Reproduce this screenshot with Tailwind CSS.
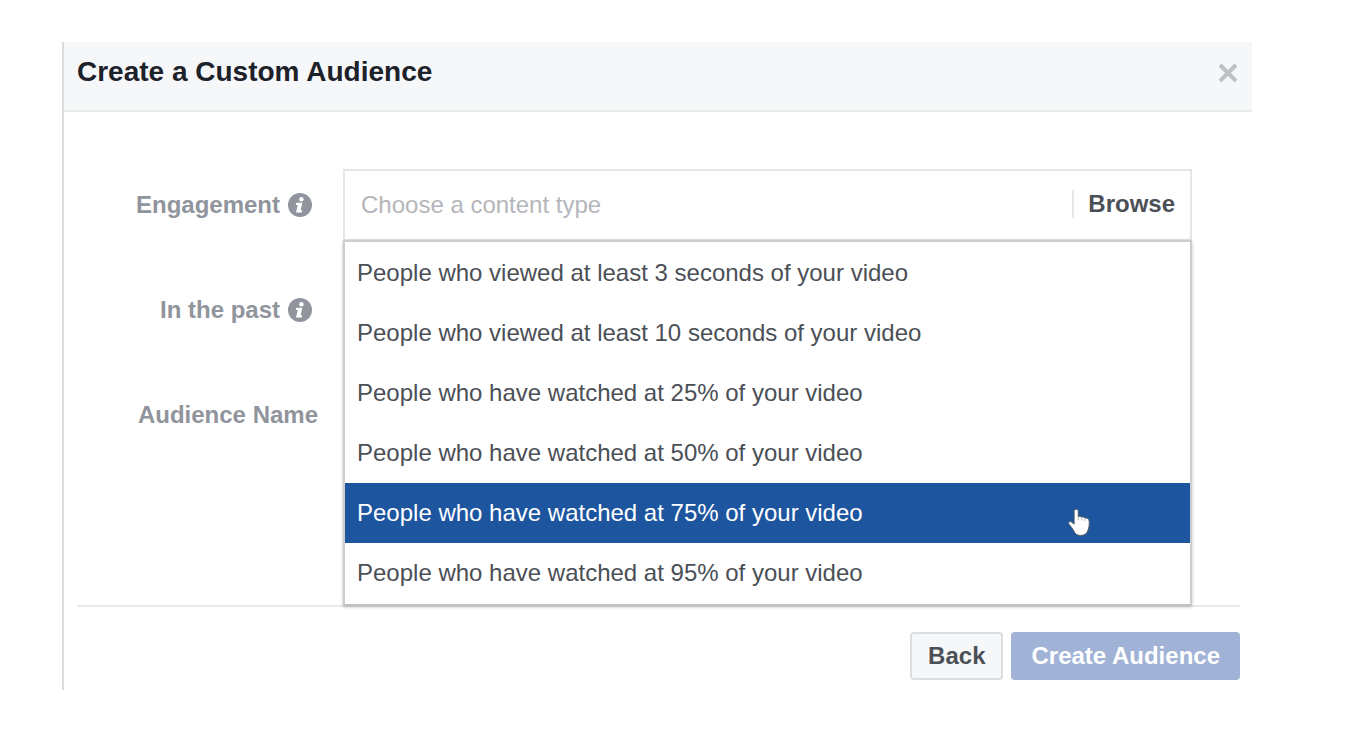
<!DOCTYPE html>
<html lang="en">
<head>
<meta charset="utf-8">
<meta name="viewport" content="width=device-width, initial-scale=1">
<title>Create a Custom Audience</title>
<script src="https://cdn.jsdelivr.net/npm/@tailwindcss/browser@4"></script>
</head>
<body class="bg-white pt-[42px] pr-[104px] pb-11 pl-[62px] font-['Liberation_Sans',Arial,sans-serif] text-2xl leading-8 text-[#4b4f56]">
<svg class="hidden" aria-hidden="true">
  <symbol id="info" viewBox="0 0 24 24">
    <circle cx="12" cy="12" r="12" fill="#90949c"/>
    <circle cx="13.4" cy="6.2" r="2.200" fill="#fff"/>
    <path d="M8.200 9.700h6.200l-1.800 7.500h1.700l-.500 2.300H8l1.800-7.500H7.700z" fill="#fff"/>
  </symbol>
</svg>
<main role="dialog" aria-labelledby="title" class="border-l-2 border-[#dcdddf]">
  <header class="flex items-center justify-between border-b-2 border-[#e8eaea] bg-[#f6f7f9] pt-3 pr-3.5 pb-5 pl-[13px]">
    <h1 id="title" class="text-[28px] leading-9 font-bold text-[#1d2129]">Create a Custom Audience</h1>
    <button type="button" aria-label="Close" class="block pt-0.5">
      <svg class="size-5" viewBox="0 0 20 20" fill="none" stroke="#bec0c4" stroke-width="4"><path d="M2 2l16 16M18 2L2 18"/></svg>
    </button>
  </header>
  <form class="pr-3 pb-2.5 pl-[13px]">
    <div class="grid grid-cols-[241px_1fr] gap-x-[25px] gap-y-[33px] border-b-2 border-[#e9eaeb] pt-[57px] pr-12 pb-[154px]">
      <div class="flex items-center justify-end gap-2 pr-1.5 font-bold text-[#90949c]">
        <label for="engagement">Engagement</label>
        <svg class="size-6" role="img" aria-label="Info"><use href="#info"/></svg>
      </div>
      <div class="relative">
        <div class="flex h-[72px] items-center border-2 border-[#e5e6e8] bg-white pr-[15px] pl-4">
          <input id="engagement" type="text" placeholder="Choose a content type" class="min-w-0 flex-1 outline-none placeholder:text-[#b4b6ba]">
          <button type="button" class="flex items-center gap-3.5 pb-0.5 font-bold"><span class="h-7 w-0.5 bg-[#e5e6e8]"></span>Browse</button>
        </div>
        <ul aria-label="Content type" class="absolute inset-x-0 top-[71px] z-10 border-2 border-[#cccdd0] border-b-[#bfc1c4] bg-white pt-px pb-px shadow-[0_1px_3px_rgba(0,0,0,0.25)]">
          <li><button type="button" class="block h-15 w-full px-3 text-left">People who viewed at least 3 seconds of your video</button></li>
          <li><button type="button" class="block h-15 w-full px-3 text-left">People who viewed at least 10 seconds of your video</button></li>
          <li><button type="button" class="block h-15 w-full px-3 text-left">People who have watched at 25% of your video</button></li>
          <li><button type="button" class="block h-15 w-full px-3 text-left">People who have watched at 50% of your video</button></li>
          <li class="relative">
            <button type="button" class="block h-15 w-full bg-[#1d559f] px-3 text-left text-white">People who have watched at 75% of your video</button>
            <svg class="absolute top-[25px] right-[99px] h-[30px] w-6" viewBox="0 0 24 30" aria-hidden="true">
              <path d="M9.200 1.300c1.400 0 2.100.9 2.100 2.200v5.200c.9-.7 2.600-.5 3.300.5 1-.6 2.500-.3 3.200.8 2.500-.4 4.200.7 4.400 3 .2 3.800-.1 7.200-1.600 10.200-1.300 2.900-3.700 4.300-6.900 4.300-3.300 0-5.300-1.400-6.800-4.300-1.400-2.800-3.200-4.800-4.900-6.900-1.300-1.900.7-3.500 2.500-2.300l2.600 2.100V3.500c0-1.300.7-2.200 2.100-2.200z" fill="#fff" stroke="#4c5866" stroke-width="1"/>
              <path d="M11.300 9v3.200M14.700 9.500v3M17.900 10.300v2.700" stroke="#b5b8bd" stroke-width="1" fill="none"/>
            </svg>
          </li>
          <li><button type="button" class="block h-15 w-full px-3 text-left">People who have watched at 95% of your video</button></li>
        </ul>
      </div>
      <div class="flex items-center justify-end gap-2 pr-1.5 font-bold text-[#90949c]">
        <label for="past">In the past</label>
        <svg class="size-6" role="img" aria-label="Info"><use href="#info"/></svg>
      </div>
      <input id="past" type="text" class="h-[72px] w-full border-2 border-[#e5e6e8] px-4">
      <div class="flex items-center justify-end font-bold text-[#90949c]">
        <label for="name">Audience Name</label>
      </div>
      <input id="name" type="text" class="h-[72px] w-full border-2 border-[#e5e6e8] px-4">
    </div>
    <div class="flex justify-end gap-2 pt-[25px] font-bold">
      <button type="button" class="h-12 rounded-sm border-2 border-[#dcdee1] bg-[#f6f7f9] px-4">Back</button>
      <button type="submit" class="h-12 rounded-sm bg-[#a0b3d6] px-5 text-white">Create Audience</button>
    </div>
  </form>
</main>
</body>
</html>
